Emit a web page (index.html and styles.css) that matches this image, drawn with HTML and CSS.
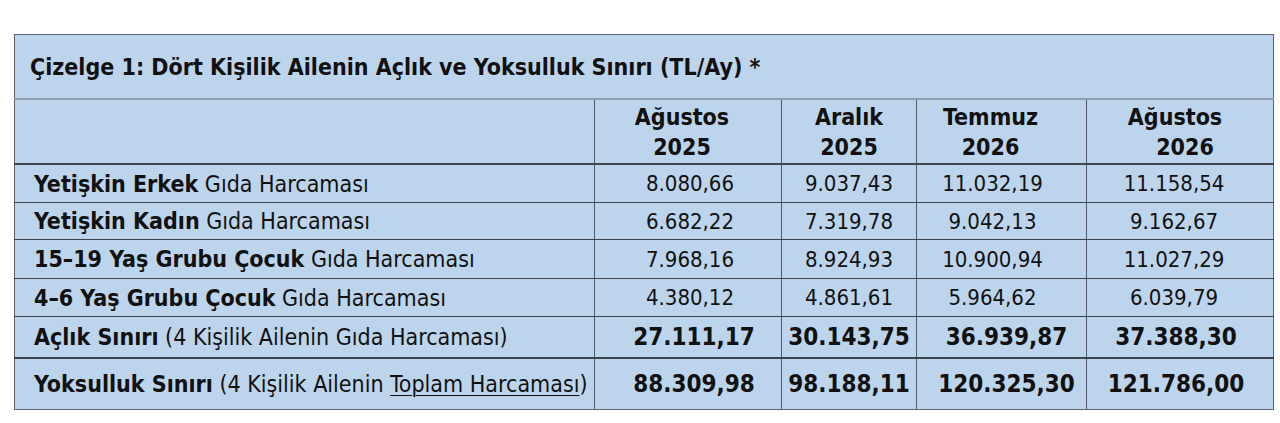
FILE: index.html
```html
<!DOCTYPE html>
<html lang="tr">
<head>
<meta charset="utf-8">
<title>Çizelge 1</title>
<link rel="stylesheet" href="styles.css">
</head>
<body>
<table class="tbl">
  <colgroup>
    <col class="c-label">
    <col class="c-1">
    <col class="c-2">
    <col class="c-3">
    <col class="c-4">
  </colgroup>
  <tr class="r-title">
    <th colspan="5" class="title">Çizelge 1: Dört Kişilik Ailenin Açlık ve Yoksulluk Sınırı (TL/Ay) *</th>
  </tr>
  <tr class="r-head">
    <th class="blank"></th>
    <th class="h h1">Ağustos<br>2025</th>
    <th class="h h2">Aralık<br>2025</th>
    <th class="h h3">Temmuz<br>2026</th>
    <th class="h h4">Ağustos<br><span class="shift">2026</span></th>
  </tr>
  <tr class="r-a">
    <td class="lbl"><b>Yetişkin Erkek</b> Gıda Harcaması</td>
    <td class="n n1">8.080,66</td><td class="n n2">9.037,43</td><td class="n n3">11.032,19</td><td class="n n4">11.158,54</td>
  </tr>
  <tr class="r-b">
    <td class="lbl"><b>Yetişkin Kadın</b> Gıda Harcaması</td>
    <td class="n n1">6.682,22</td><td class="n n2">7.319,78</td><td class="n n3">9.042,13</td><td class="n n4">9.162,67</td>
  </tr>
  <tr class="r-c">
    <td class="lbl"><b>15–19 Yaş Grubu Çocuk</b> Gıda Harcaması</td>
    <td class="n n1">7.968,16</td><td class="n n2">8.924,93</td><td class="n n3">10.900,94</td><td class="n n4">11.027,29</td>
  </tr>
  <tr class="r-d">
    <td class="lbl"><b>4–6 Yaş Grubu Çocuk</b> Gıda Harcaması</td>
    <td class="n n1">4.380,12</td><td class="n n2">4.861,61</td><td class="n n3">5.964,62</td><td class="n n4">6.039,79</td>
  </tr>
  <tr class="r-e">
    <td class="lbl"><b>Açlık Sınırı</b> (4 Kişilik Ailenin Gıda Harcaması)</td>
    <td class="n n1 bold">27.111,17</td><td class="n n2 bold">30.143,75</td><td class="n n3 bold">36.939,87</td><td class="n n4 bold">37.388,30</td>
  </tr>
  <tr class="r-f">
    <td class="lbl"><b>Yoksulluk Sınırı</b> (4 Kişilik Ailenin <u>Toplam Harcaması</u>)</td>
    <td class="n n1 bold">88.309,98</td><td class="n n2 bold">98.188,11</td><td class="n n3 bold">120.325,30</td><td class="n n4 bold">121.786,00</td>
  </tr>
</table>
</body>
</html>
```
FILE: styles.css
```css
html, body {
  margin: 0;
  padding: 0;
  background: #ffffff;
}
body {
  padding: 34px 0 0 14px;
  font-family: "DejaVu Sans Condensed", "DejaVu Sans", sans-serif;
  font-stretch: condensed;
  color: #111111;
}
.tbl {
  border-collapse: collapse;
  width: 1259px;
  table-layout: fixed;
  background: #bdd5ec;
  border: 1px solid #5c6470;
  font-size: 23px;
}
.c-label { width: 580px; }
.c-1 { width: 187px; }
.c-2 { width: 135px; }
.c-3 { width: 170px; }
.c-4 { width: 187px; }

th, td {
  padding: 0;
  font-weight: normal;
}
.title {
  height: 63px;
  text-align: left;
  padding-left: 15px;
  font-weight: bold;
  border-bottom: 2px solid #8c9db0;
}
.r-head th {
  height: 63px;
  border-bottom: 2px solid #3f4650;
}
.h {
  font-weight: bold;
  text-align: center;
  line-height: 30px;
  border-left: 1px solid #4e5866;
}
.blank { border-left: none; }
.h1 { padding-right: 12px; }
.h3 { padding-right: 22px; }
.h4 { padding-right: 10px; }
.shift { position: relative; left: 10px; }

td {
  border-bottom: 1px solid #3a414a;
}
.lbl {
  padding-left: 19px;
  text-align: left;
}
.n {
  text-align: center;
  border-left: 1px solid #4e5866;
  font-size: 22px;
}
.n1 { padding-left: 4px; }
.n3 { padding-right: 18px; }
.n4 { padding-right: 12px; }
.n.bold { font-weight: bold; font-size: 24px; }
.n1.bold { padding-left: 12px; }
.n3.bold { padding-right: 0; padding-left: 10px; }
.n4.bold { padding-right: 8px; }
.r-a td { height: 37px; }
.r-b td { height: 36px; }
.r-c td { height: 38px; }
.r-d td { height: 37px; }
.r-e td { height: 40px; border-bottom-width: 2px; }
.r-f td { height: 50px; border-bottom: 1px solid #5c6470; }
u {
  text-decoration-thickness: 1px;
  text-underline-offset: 3px;
}
```
